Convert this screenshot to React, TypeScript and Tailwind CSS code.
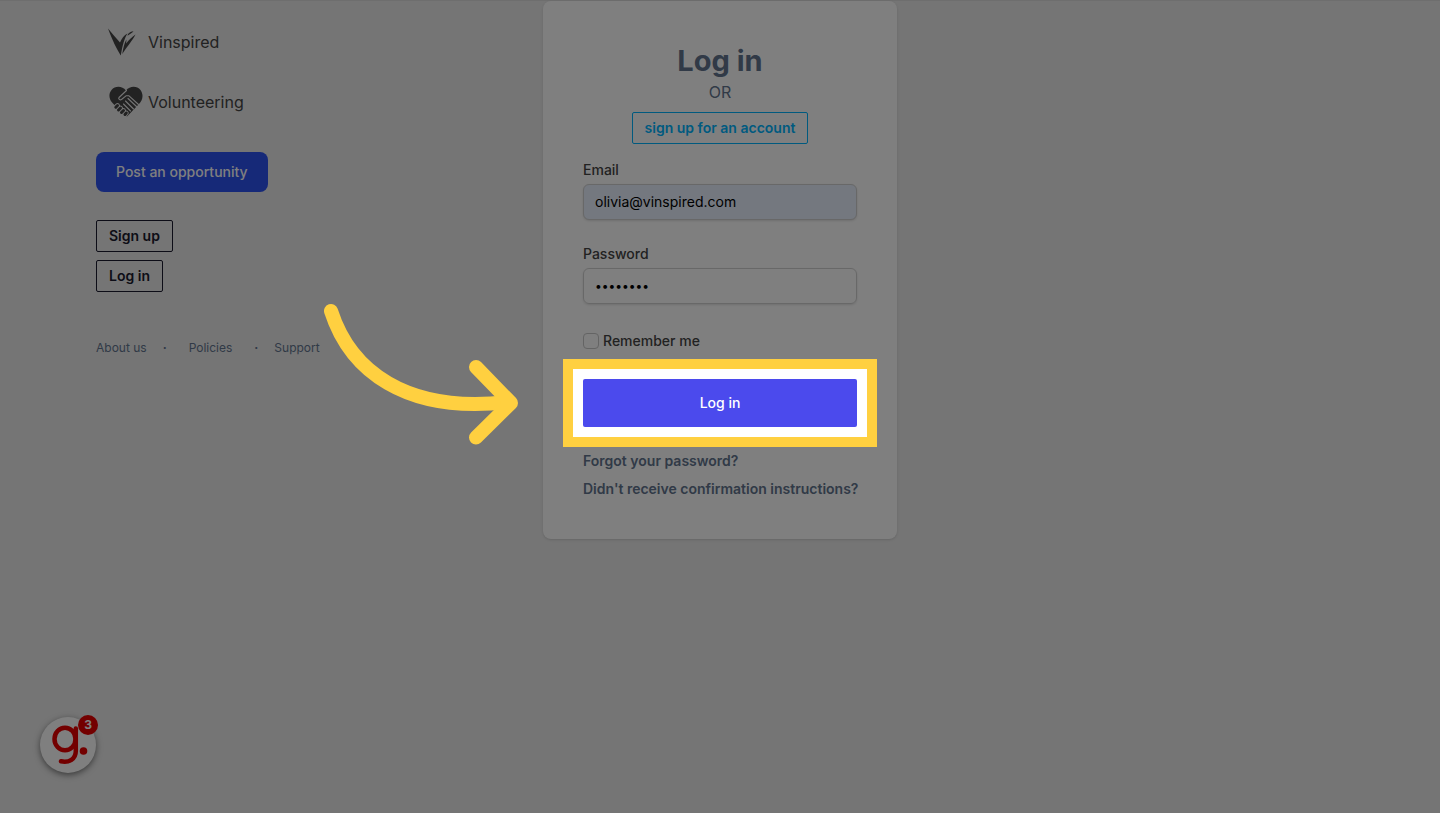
import React from 'react';
import { clsx } from 'clsx';

interface BrandLinkProps {
  label: string;
  children: React.ReactNode;
}

const BrandLink: React.FC<BrandLinkProps> = ({ label, children }) => (
  <a href="#" className="flex h-10 items-center text-[#444444]">
    <span className="w-13 pl-3">{children}</span>
    {label}
  </a>
);

interface FieldProps {
  id: string;
  label: string;
  type: string;
  value: string;
  className?: string;
}

const Field: React.FC<FieldProps> = ({ id, label, type, value, className }) => (
  <div className="mb-6 w-full">
    <label htmlFor={id} className="mb-1 block text-sm font-medium text-[#444444]">
      {label}
    </label>
    <input
      id={id}
      type={type}
      defaultValue={value}
      className={clsx(
        'h-9 w-full rounded-md border border-[#d1d1d1] px-[11px] pb-0.5 text-black shadow-sm',
        className
      )}
    />
  </div>
);

const VinspiredLogo = () => (
  <svg width="28" height="28" viewBox="0 0 28 28" fill="currentColor" aria-hidden="true">
    <path d="M0 0.500C3.500 5 7.500 9 12 14.500C14 10 16 7.500 19.500 5.500C16.500 10 14.800 16 12.800 27.500C9 21.500 4 11.500 0 0.500Z" />
    <path d="M20 6C21.300 4.300 23.500 3.500 25.500 3.200C24 5 22 6 19.500 7.800Z" />
    <path d="M27.500 6.500C25 12 19 18.500 14.300 26C15.200 20.500 16.500 14.500 18.500 11.500C18.300 13.500 18.200 14.500 18.200 15.500C20.500 12 24 9 27.500 6.500Z" />
  </svg>
);

const HandshakeHeart = () => (
  <svg width="36" height="32" viewBox="0 0 36 32" aria-hidden="true">
    <path
      d="M18 4.500C14 -0.500 7 -0.300 3.500 4C0 8.500 1.200 14 5 17.500L8 20.500L16 28.500L19 30.500L30.500 18.500C35 14.500 35.800 8.500 32.500 4C29 -0.300 22 -0.500 18 4.500Z"
      fill="currentColor"
    />
    <g fill="none" stroke="#eaeaea" strokeWidth="1.100" strokeLinecap="round" strokeLinejoin="round">
      <path d="M18.500 4.500L11 11.500C10 13 12 14.500 13.500 13.500L18 9.800H21L30.500 18.500" />
      <path d="M20 12.500L28.500 20.500" />
      <path d="M17.500 15L25.500 23" />
      <path d="M15.500 18L22.500 25" />
    </g>
    <g fill="none" strokeLinecap="round">
      <path
        d="M9.500 19.500L7.800 21.200M12.500 22L10.500 24M15.500 24.500L13.500 26.500M18.300 27L17 28.500"
        stroke="#eaeaea"
        strokeWidth="4.800"
      />
      <path
        d="M9.500 19.500L7.800 21.200M12.500 22L10.500 24M15.500 24.500L13.500 26.500M18.300 27L17 28.500"
        stroke="currentColor"
        strokeWidth="3"
      />
    </g>
  </svg>
);

const Sidebar = () => (
  <aside className="flex flex-col items-start pt-[21px]">
    <BrandLink label="Vinspired">
      <VinspiredLogo />
    </BrandLink>
    <div className="mt-5">
      <BrandLink label="Volunteering">
        <HandshakeHeart />
      </BrandLink>
    </div>
    <button className="mt-[30px] h-10 rounded-lg bg-[#2d52f0] px-5 text-sm font-medium text-white">
      Post an opportunity
    </button>
    <a
      href="#"
      className="mt-7 flex h-8 items-center rounded-xs border border-[#1b1a2e] px-3 text-sm font-semibold text-[#1b1a2e]"
    >
      Sign up
    </a>
    <a
      href="#"
      className="mt-2 flex h-8 items-center rounded-xs border border-[#1b1a2e] px-3 text-sm font-semibold text-[#1b1a2e]"
    >
      Log in
    </a>
    <nav className="mt-12 flex items-center text-xs text-slate-500">
      <a href="#">About us</a>
      <span className="ml-4 w-1 font-bold">·</span>
      <a href="#" className="mx-[22px]">
        Policies
      </a>
      <span className="mr-4 w-1 font-bold">·</span>
      <a href="#">Support</a>
    </nav>
  </aside>
);

const Arrow = () => (
  <svg
    className="absolute -top-[79px] right-full mr-[59px]"
    width="204"
    height="148"
    viewBox="320 300 204 148"
    fill="none"
    stroke="#ffd040"
    strokeWidth="14"
    strokeLinecap="round"
    strokeLinejoin="round"
    aria-hidden="true"
  >
    <path d="M331 311C350 370 405 414 508 402" />
    <path d="M476 367L511 403L476 437.500" />
  </svg>
);

const LoginCard = () => (
  <main className="w-[354px] rounded-lg bg-white px-10 pt-10 pb-10 shadow-sm">
    <form className="flex flex-col items-start" onSubmit={(e) => e.preventDefault()}>
      <div className="mb-4 flex w-full flex-col items-center text-slate-500">
        <h1 className="text-[29px] leading-[39px] font-bold">Log in</h1>
        <p className="leading-6">OR</p>
        <a
          href="#"
          className="mt-2 flex h-8 items-center rounded-xs border border-[#00b4ff] px-3 text-sm font-semibold text-[#00b4ff]"
        >
          sign up for an account
        </a>
      </div>
      <Field
        id="email"
        label="Email"
        type="email"
        value="olivia@vinspired.com"
        className="bg-[#e8f0fe] text-sm"
      />
      <Field id="password" label="Password" type="password" value="password" className="text-xs" />
      <label className="mt-[3px] flex items-center gap-1 text-sm font-medium text-[#444444]">
        <input
          type="checkbox"
          className="size-4 appearance-none rounded border border-[#c8c8c8] bg-white"
        />
        Remember me
      </label>
      <div className="relative mt-7 w-full">
        <button className="h-12 w-full rounded-xs bg-[#4b4aed] text-sm font-medium text-white">
          Log in
        </button>
        {/* tour step: dims the page around the button */}
        <div className="pointer-events-none absolute -inset-5 z-20 border-10 border-[#ffd040] shadow-[0_0_0_3000px_rgba(0,0,0,0.5)]" />
        <div className="pointer-events-none absolute inset-0 z-30">
          <Arrow />
        </div>
      </div>
      <a href="#" className="mt-6 text-sm font-semibold text-slate-500">
        Forgot your password?
      </a>
      <a href="#" className="mt-2 text-sm font-semibold whitespace-nowrap text-slate-500">
        Didn't receive confirmation instructions?
      </a>
    </form>
  </main>
);

const HelpWidget = () => (
  <button
    aria-label="Open guides, 3 new"
    className="absolute bottom-10 left-10 z-10 size-14 rounded-full bg-white shadow-[0_2px_6px_rgba(0,0,0,0.5)]"
  >
    <svg
      width="56"
      height="56"
      viewBox="0 0 56 56"
      fill="none"
      stroke="#e60000"
      strokeWidth="4.500"
      strokeLinecap="round"
      aria-hidden="true"
    >
      <ellipse cx="25" cy="22" rx="10.500" ry="11.300" />
      <path d="M35.800 11.500V34C35.800 42 29 46 21 44.300" />
      <circle cx="43.500" cy="34" r="3.800" fill="#e60000" stroke="none" />
    </svg>
    <span className="absolute -top-0.5 -right-0.5 flex size-5 items-center justify-center rounded-full bg-[#e60000] text-xs font-bold text-white">
      3
    </span>
  </button>
);

export default function App() {
  return (
    <div className="relative min-h-screen overflow-hidden bg-[#eaeaea] font-['Inter',sans-serif]">
      <div className="h-px bg-[#dcdcdc]" />
      <div className="grid grid-cols-[1fr_auto_1fr] items-start px-24">
        <Sidebar />
        <LoginCard />
      </div>
      <HelpWidget />
    </div>
  );
}
